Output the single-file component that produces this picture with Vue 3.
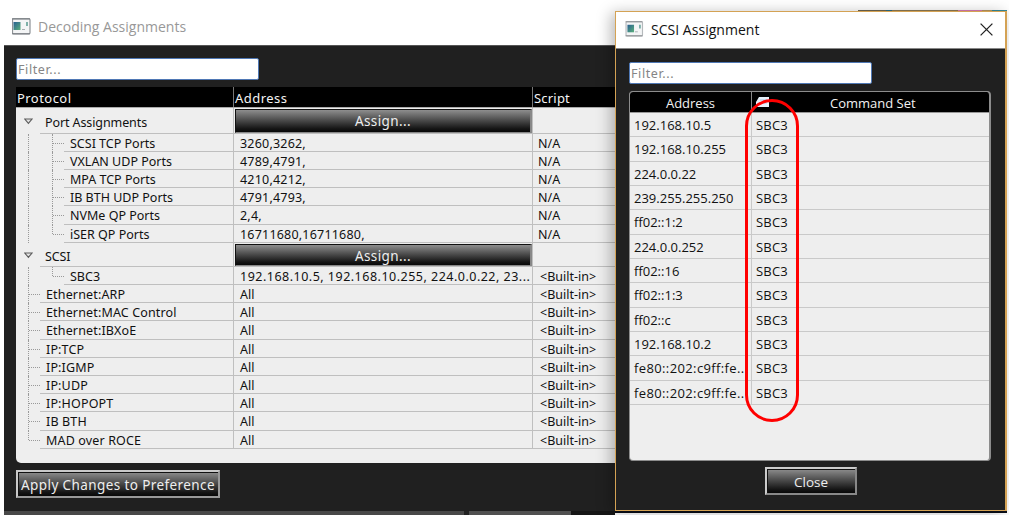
<template>
  <div class="desktop">
    <section class="main-window">
      <header class="main-title">
        <svg class="app-icon" width="19" height="17" viewBox="0 0 19 17">
          <rect x="0.5" y="0.8" width="17.5" height="15" rx="1" fill="#f4f5f6" stroke="#8d9296" stroke-width="1.2" />
          <path d="M0 .8h18M0 15.8h18" stroke="#777b80" />
          <rect x="1.5" y="4" width="7" height="8" fill="url(#screen)" />
          <path d="M10 11.5h3" stroke="#a8adb2" />
          <path d="M15 4v4" stroke="#3f8b80" stroke-width="1.3" />
          <defs>
            <linearGradient id="screen" x1="0" y1="0" x2="1" y2="1">
              <stop offset="0" stop-color="#285f91" />
              <stop offset="1" stop-color="#5bb07b" />
            </linearGradient>
          </defs>
        </svg>
        <span class="title-text title-text--inactive">Decoding Assignments</span>
      </header>

      <div class="main-body">
        <input class="filter" type="text" placeholder="Filter..." />
        <div class="tree">
          <div class="tree-head">
            <span class="head-protocol">Protocol</span>
            <span class="head-address">Address</span>
            <span class="head-script">Script</span>
          </div>
          <div
            v-for="(row, i) in rows"
            :key="row.name"
            class="tree-row"
            :class="{ 'tree-row--group': row.group, 'tree-row--first': i === 0 }"
          >
            <span class="guide" :class="{ 'guide--line': !row.group, 'guide--branch': !row.group && !row.child, 'guide--last': row.end }">
              <svg v-if="row.group" width="9" height="7" viewBox="0 0 9 7">
                <path d="M.8 1h7.2L4.4 5.4z" fill="#e2e2e2" stroke="#5c5c5c" stroke-width="1.1" />
              </svg>
            </span>
            <span v-if="row.child" class="guide guide--line guide--branch" :class="{ 'guide--last': row.last }"></span>
            <span class="cell cell-name" :class="{ 'cell-name--child': row.child, 'cell-name--top': !row.child && !row.group }">{{ row.name }}</span>
            <span class="cell cell-address">
              <button v-if="row.group" class="dark-btn assign-btn">Assign...</button>
              <span v-else :class="{ 'address-list': row.long, digits: row.child && !row.long }">{{ row.address }}</span>
            </span>
            <span class="cell cell-script" :class="{ 'cell-script--builtin': row.script === builtin }">{{ row.script }}</span>
          </div>
        </div>
        <button class="dark-btn apply-btn">Apply Changes to Preference</button>
      </div>
      <div class="taskbar"></div>
    </section>

    <div class="backdrop-top"></div>
    <div class="backdrop-bottom"></div>

    <section class="dialog">
      <header class="dialog-title">
        <svg class="app-icon" width="19" height="16" viewBox="0 0 19 17">
          <rect x="0.5" y="0.8" width="17.5" height="15" rx="1" fill="#f4f5f6" stroke="#b5b9bc" stroke-width="1.2" />
          <path d="M0 .8h18M0 15.8h18" stroke="#85898d" />
          <rect x="2" y="4" width="7" height="8" fill="url(#screen)" />
          <path d="M10 11.5h3" stroke="#a8adb2" />
          <path d="M15.3 4v4" stroke="#3f8b80" stroke-width="1.3" />
        </svg>
        <span class="title-text title-text--dialog">SCSI Assignment</span>
        <svg class="close-icon" width="13" height="13" viewBox="0 0 13 13">
          <path d="M.6.6l11.8 11.8M12.4.6L.6 12.4" stroke="#222" stroke-width="1.3" />
        </svg>
      </header>
      <div class="dialog-body">
        <input class="filter" type="text" placeholder="Filter..." />
        <div class="grid">
          <div class="grid-head">
            <span class="grid-head-address">Address</span>
            <span class="grid-head-command">
              <svg class="sort-icon" width="13" height="10" viewBox="0 0 13 10">
                <path d="M3 0h10v10H0V5z" fill="#e8f1fb" />
                <path d="M4 3h7M3 6h8" stroke="#a8c3df" />
              </svg>
              <span>Command Set</span>
            </span>
          </div>
          <div v-for="(address, i) in addresses" :key="i" class="grid-row">
            <span class="grid-address" :class="{ 'grid-address--wide': address.startsWith('fe80') }">{{ address }}</span>
            <span class="grid-command">SBC3</span>
          </div>
        </div>
        <button class="dark-btn close-btn">Close</button>
      </div>
    </section>

    <div class="highlight"></div>
  </div>
</template>

<script setup>
const builtin = '<Built-in>';

const rows = [
  { name: 'Port Assignments', group: true },
  { name: 'SCSI TCP Ports', child: true, address: '3260,3262,', script: 'N/A' },
  { name: 'VXLAN UDP Ports', child: true, address: '4789,4791,', script: 'N/A' },
  { name: 'MPA TCP Ports', child: true, address: '4210,4212,', script: 'N/A' },
  { name: 'IB BTH UDP Ports', child: true, address: '4791,4793,', script: 'N/A' },
  { name: 'NVMe QP Ports', child: true, address: '2,4,', script: 'N/A' },
  { name: 'iSER QP Ports', child: true, last: true, address: '16711680,16711680,', script: 'N/A' },
  { name: 'SCSI', group: true },
  { name: 'SBC3', child: true, last: true, long: true, address: '192.168.10.5, 192.168.10.255, 224.0.0.22, 23...', script: builtin },
  { name: 'Ethernet:ARP', address: 'All', script: builtin },
  { name: 'Ethernet:MAC Control', address: 'All', script: builtin },
  { name: 'Ethernet:IBXoE', address: 'All', script: builtin },
  { name: 'IP:TCP', address: 'All', script: builtin },
  { name: 'IP:IGMP', address: 'All', script: builtin },
  { name: 'IP:UDP', address: 'All', script: builtin },
  { name: 'IP:HOPOPT', address: 'All', script: builtin },
  { name: 'IB BTH', address: 'All', script: builtin },
  { name: 'MAD over ROCE', address: 'All', script: builtin, end: true },
];

const addresses = [
  '192.168.10.5',
  '192.168.10.255',
  '224.0.0.22',
  '239.255.255.250',
  'ff02::1:2',
  '224.0.0.252',
  'ff02::16',
  'ff02::1:3',
  'ff02::c',
  '192.168.10.2',
  'fe80::202:c9ff:fe..',
  'fe80::202:c9ff:fe..',
];
</script>

<style>
body {
  margin: 0;
  background: #fff;
  overflow: hidden;
}
</style>

<style scoped>
.desktop {
  position: relative;
  width: 1009px;
  height: 515px;
  overflow: hidden;
  font-family: "Noto Sans", sans-serif;
  font-size: 12.5px;
  color: #111;
}
.desktop * {
  box-sizing: border-box;
}
.main-window {
  width: 615px;
  height: 515px;
  padding-left: 4px;
}
.main-title {
  height: 45px;
  display: flex;
  align-items: center;
  padding: 7px 0 0 8px;
}
.app-icon {
  flex: none;
}
.title-text {
  font-family: "Open Sans", sans-serif;
  font-size: 14px;
  white-space: nowrap;
}
.title-text--inactive {
  margin-left: 7px;
  color: #989898;
}
.main-body {
  height: 466px;
  padding: 12px 0 0 12px;
  background: #202020;
  border-top: 1px solid #555;
}
.filter {
  display: block;
  width: 243px;
  height: 22px;
  padding: 1px 1px 0;
  border: 1px solid #4f78b5;
  border-radius: 2px;
  outline: none;
  background: #fff;
  font-family: "Noto Sans", sans-serif;
  font-size: 12.5px;
  letter-spacing: 0.6px;
}
.filter::placeholder {
  color: #858585;
}
.tree {
  height: 376px;
  margin-top: 7px;
  background: #eee;
  border-bottom-left-radius: 5px;
  overflow: hidden;
}
.tree-head {
  height: 21px;
  display: flex;
  background: #000;
  color: #f4f4f4;
  border-bottom: 1px solid #aaa;
  font-size: 13px;
  line-height: 23px;
  letter-spacing: 0.45px;
}
.tree-head span {
  padding-left: 1px;
}
.head-protocol {
  width: 217px;
}
.head-address {
  width: 299px;
  border-left: 1px solid #777;
}
.head-script {
  flex: 1;
  border-left: 1px solid #777;
}
.tree-head .head-script {
  letter-spacing: 0.2px;
}
.tree-row {
  height: 18.2px;
  display: flex;
  line-height: 20px;
  white-space: nowrap;
}
.tree-row--group {
  height: 24.2px;
  line-height: 27px;
}
.tree-row--first {
  height: 25.6px;
  line-height: 29px;
}
.guide {
  position: relative;
  flex: none;
  width: 24px;
  display: flex;
  align-items: center;
  padding-left: 8px;
}
.guide svg {
  margin-top: 2px;
}
.guide--line::before {
  content: "";
  position: absolute;
  left: 12px;
  top: 0;
  bottom: 0;
  border-left: 1px dotted #999;
}
.guide--last::before {
  bottom: 9px;
}
.guide--branch::after {
  content: "";
  position: absolute;
  left: 13px;
  top: 9px;
  width: 11px;
  border-top: 1px dotted #999;
}
.cell {
  border-bottom: 1px solid #bfbfbf;
}
.cell-name {
  flex: 1;
  min-width: 0;
  padding-left: 5px;
  letter-spacing: -0.1px;
}
.cell-name--child {
  padding-left: 6px;
  letter-spacing: 0;
}
.cell-name--top {
  padding-left: 6px;
  letter-spacing: 0.15px;
}
.cell-address {
  flex: none;
  width: 299px;
  border-left: 1px solid #bfbfbf;
  padding-left: 6px;
}
.tree-row--group .cell-address {
  padding: 1px 0 0 1px;
}
.cell-script {
  flex: none;
  width: 83px;
  border-left: 1px solid #bfbfbf;
  padding-left: 5px;
}
.cell-script--builtin {
  padding-left: 7px;
}
.digits {
  letter-spacing: 0.2px;
}
.address-list {
  letter-spacing: 0.49px;
}
.dark-btn {
  display: block;
  padding: 0;
  background: linear-gradient(#8e8e8e, #4d4d4d 45%, #151515 85%, #080808);
  color: #eee;
  font-family: "Noto Sans", sans-serif;
  font-size: 13px;
  white-space: nowrap;
}
.assign-btn {
  width: 100%;
  height: 100%;
  border: 1px solid #111;
  border-right: 2px solid #888;
  border-bottom: 1px solid #888;
  font-size: 13.5px;
  letter-spacing: 0.4px;
  line-height: 22px;
}
.apply-btn {
  width: 204px;
  height: 28px;
  margin-top: 7px;
  border: 2px solid #c9c9c9;
  border-right-color: #999;
  border-bottom-color: #999;
  box-shadow: inset 1px 1px #111;
  font-size: 13.5px;
  letter-spacing: 0.4px;
  line-height: 26px;
}
.taskbar {
  height: 4px;
  background: linear-gradient(90deg, #484848 0 460px, #222 460px 465px, #505050 465px 567px, #161616 567px);
}

/* slivers of the windows behind the dialog */
.backdrop-top {
  position: absolute;
  left: 858px;
  top: 10px;
  width: 149px;
  height: 1px;
  background: linear-gradient(90deg, #6d6652 0 28px, #2b6d84 28px 34px, #8d7a55 34px 100px, #d97bb4 100px 124px, #b49762 124px 134px, #348a9a 134px);
}
.backdrop-bottom {
  position: absolute;
  left: 615px;
  top: 510px;
  width: 392px;
  height: 3px;
  background: #0a0e18;
}
.dialog {
  position: absolute;
  left: 615px;
  top: 11px;
  width: 392px;
  height: 500px;
  border: 1px solid #d4a254;
  border-right-width: 2px;
  background: #202020;
  box-shadow: -4px 2px 14px rgba(0, 0, 0, 0.28);
}
.dialog-title {
  height: 37px;
  display: flex;
  align-items: center;
  padding: 0 12px 2px 9px;
  background: #fff;
  border-bottom: 1px solid #888;
}
.title-text--dialog {
  margin-left: 7px;
  padding-top: 1px;
  font-size: 14px;
  letter-spacing: 0.03px;
  color: #111;
}
.close-icon {
  margin-left: auto;
}
.dialog-body {
  padding: 13px 14px 0 13px;
}
.grid {
  width: 362px;
  height: 370px;
  margin-top: 7px;
  border: 1px solid #8c8c8c;
  border-right-width: 2px;
  border-radius: 4px;
  background: #eee;
  overflow: hidden;
}
.grid-head {
  height: 21px;
  display: flex;
  background: #000;
  color: #f2f2f2;
  font-family: "Open Sans", sans-serif;
  font-size: 13px;
  line-height: 23px;
  border-bottom: 1px solid #999;
}
.grid-head-address {
  width: 121px;
  text-align: center;
}
.grid-head-command {
  flex: 1;
  display: flex;
  border-left: 1px solid #888;
}
.sort-icon {
  margin: 5px 61px 0 4px;
}
.grid-row {
  height: 24.33px;
  display: flex;
  font-family: "Open Sans", sans-serif;
  font-size: 13px;
  line-height: 25px;
  white-space: nowrap;
  border-bottom: 1px solid #c9c9c9;
}
.grid-address {
  width: 121px;
  padding-left: 4px;
}
.grid-address--wide {
  letter-spacing: 0.38px;
}
.grid-command {
  flex: 1;
  padding-left: 4px;
  border-left: 1px solid #c9c9c9;
  letter-spacing: 0.2px;
}
.close-btn {
  width: 92px;
  height: 28px;
  margin: 6px 0 0 136px;
  border: 2px solid #ccc;
  border-right-color: #888;
  border-bottom-color: #888;
  box-shadow: inset 1px 1px #111;
  font-family: "Open Sans", sans-serif;
  font-size: 13.5px;
  line-height: 26px;
}
.highlight {
  position: absolute;
  left: 745px;
  top: 99px;
  width: 54px;
  height: 323px;
  box-sizing: border-box;
  border: 3px solid #ff0000;
  border-radius: 27px;
}
</style>
